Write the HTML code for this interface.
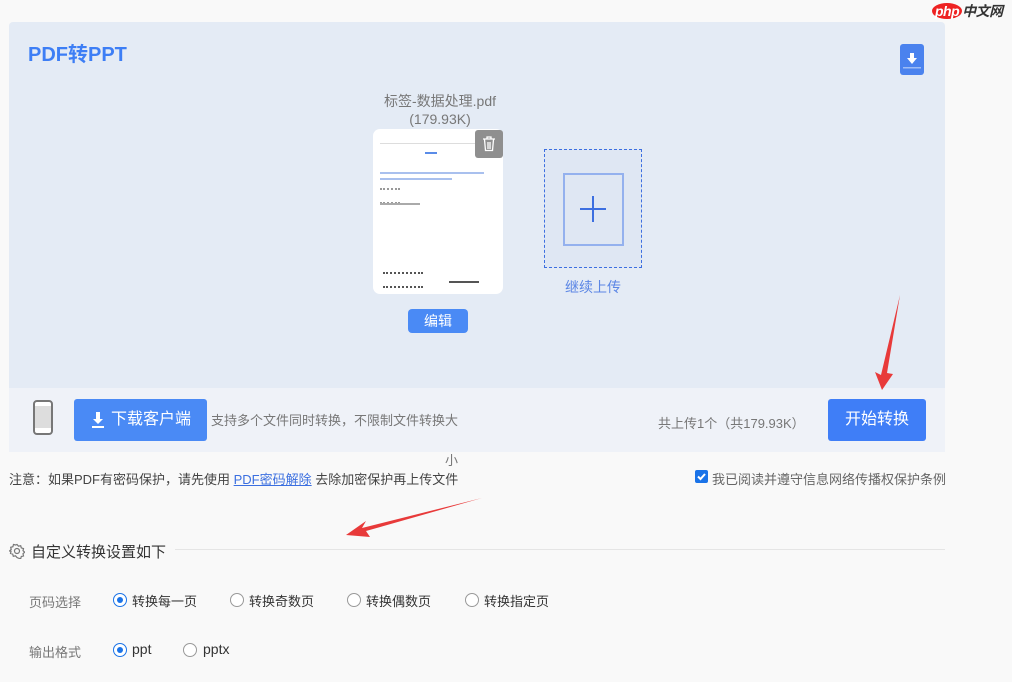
<!DOCTYPE html>
<html><head><meta charset="utf-8"><style>
body{margin:0;width:1012px;height:682px;background:#f9f9f9;font-family:"Liberation Sans","Noto Sans CJK SC",sans-serif;position:relative;overflow:hidden}
.a{position:absolute;white-space:nowrap}
</style></head><body>
<div class="a" style="left:9px;top:22px;width:936px;height:366px;background:#e4ebf5;border-radius:4px 4px 0 0"></div>
<div class="a" style="left:28px;top:38px;font-size:20px;font-weight:bold;color:#3d7ef5">PDF转PPT</div>
<div class="a" style="left:900px;top:44px;width:24px;height:31px;background:#4a82ee;border-radius:3px">
<svg width="24" height="31"><path d="M10 9h4v5h3l-5 6-5-6h3z" fill="#fff"/><rect x="3" y="23" width="18" height="1.5" fill="#9ebcf5"/></svg></div>
<div class="a" style="left:360px;top:92px;width:160px;text-align:center;font-size:14px;color:#777;line-height:18px">标签-数据处理.pdf<br>(179.93K)</div>
<div class="a" style="left:373px;top:129px;width:130px;height:165px;background:#fff;border-radius:7px"></div>
<div class="a" style="left:380px;top:143px;width:95px;height:1px;background:#ddd"></div>
<div class="a" style="left:425px;top:152px;width:12px;height:2px;background:#5a8ce8"></div>
<div class="a" style="left:380px;top:172px;width:104px;height:2px;background:#a9c0ee"></div>
<div class="a" style="left:380px;top:178px;width:72px;height:2px;background:#a9c0ee"></div>
<div class="a" style="left:380px;top:188px;width:20px;height:12px;border-top:2px dotted #999;border-bottom:2px dotted #999"></div>
<div class="a" style="left:380px;top:203px;width:40px;height:2px;background:#aaa"></div>
<div class="a" style="left:383px;top:272px;width:40px;height:12px;border-top:2px dotted #555;border-bottom:2px dotted #555"></div>
<div class="a" style="left:449px;top:281px;width:30px;height:2px;background:#555"></div>
<div class="a" style="left:475px;top:130px;width:28px;height:28px;background:#8f8f8f;border-radius:3px">
<svg width="28" height="28" fill="none" stroke="#fff" stroke-width="1.3"><path d="M8 9h12M12 9V7h4v2M9.5 9.5l1 11h7l1-11M13 12v7M15 12v7"/></svg></div>
<div class="a" style="left:408px;top:309px;width:60px;height:24px;background:#4a8af5;border-radius:4px;color:#fff;font-size:14px;text-align:center;line-height:24px">编辑</div>
<div class="a" style="left:544px;top:149px;width:96px;height:117px;border:1px dashed #3d6fe0;background:#dfe7f3"></div>
<div class="a" style="left:563px;top:173px;width:57px;height:69px;border:2px solid #94b1ee"></div>
<div class="a" style="left:580px;top:208px;width:26px;height:2px;background:#3d6fe0"></div>
<div class="a" style="left:592px;top:196px;width:2px;height:26px;background:#3d6fe0"></div>
<div class="a" style="left:544px;top:277px;width:98px;text-align:center;font-size:14px;color:#5b86e5">继续上传</div>
<div class="a" style="left:9px;top:388px;width:936px;height:64px;background:#eff2f8"></div>
<div class="a" style="left:33px;top:400px;width:20px;height:35px;border:2px solid #777;border-radius:4px;box-sizing:border-box;background:linear-gradient(#fff 0 4px,#ddd 4px 26px,#fff 26px)"></div>
<div class="a" style="left:74px;top:399px;width:133px;height:42px;background:#4a8af5;border-radius:3px;color:#fff;font-size:16px;line-height:42px">
<svg class="a" style="left:16px;top:13px" width="16" height="16"><path d="M6 0h4v7h3l-5 5-5-5h3z M2 14h12v2H2z" fill="#fff"/></svg><span style="margin-left:37px">下载客户端</span></div>
<div class="a" style="left:211px;top:410px;font-size:13px;color:#777">支持多个文件同时转换，不限制文件转换大</div>
<div class="a" style="left:445px;top:450px;font-size:13px;color:#777">小</div>
<div class="a" style="left:658px;top:413px;font-size:13px;color:#777">共上传1个（共179.93K）</div>
<div class="a" style="left:828px;top:399px;width:98px;height:42px;background:#3f7ef7;border-radius:3px;color:#fff;font-size:16px;text-align:center;line-height:42px">开始转换</div>
<div class="a" style="left:9px;top:469px;font-size:13px;color:#444">注意：如果PDF有密码保护，请先使用 <span style="color:#3b6fe0;text-decoration:underline">PDF密码解除</span> 去除加密保护再上传文件</div>
<div class="a" style="left:695px;top:470px;width:13px;height:13px;background:#1a73e8;border-radius:2px"><svg width="13" height="13"><path d="M3 6.5l2.5 2.5 4.5-5" stroke="#fff" stroke-width="2" fill="none"/></svg></div>
<div class="a" style="left:712px;top:469px;font-size:13px;color:#666">我已阅读并遵守信息网络传播权保护条例</div>
<div class="a" style="left:175px;top:549px;width:770px;height:1px;background:#e5e5e5"></div>
<svg class="a" style="left:9px;top:543px" width="16" height="16" fill="none" stroke="#777" stroke-width="1.2"><circle cx="8" cy="8" r="2.5"/><path d="M8 1.5l1.5 1.7 2.2-.5.6 2.2 2.2.6-.5 2.2 1.7 1.5-1.7 1.5.5 2.2-2.2.6-.6 2.2-2.2-.5L8 14.5l-1.5-1.7-2.2.5-.6-2.2-2.2-.6.5-2.2L.5 8l1.7-1.5-.5-2.2 2.2-.6.6-2.2 2.2.5z"/></svg>
<div class="a" style="left:31px;top:541px;font-size:15px;color:#333">自定义转换设置如下</div>
<div class="a" style="left:29px;top:592px;font-size:13px;color:#777">页码选择</div>
<div class="a" style="left:29px;top:642px;font-size:13px;color:#777">输出格式</div>
<style>.r{position:absolute;width:14px;height:14px;border:1px solid #999;border-radius:50%;box-sizing:border-box;background:#fff}.r.on{border-color:#1a73e8}.r.on::after{content:"";position:absolute;left:3px;top:3px;width:6px;height:6px;border-radius:50%;background:#1a73e8}.t{position:absolute;font-size:13px;color:#333}</style>
<div class="r on" style="left:113px;top:593px"></div><div class="t" style="left:132px;top:591px">转换每一页</div>
<div class="r" style="left:230px;top:593px"></div><div class="t" style="left:249px;top:591px">转换奇数页</div>
<div class="r" style="left:347px;top:593px"></div><div class="t" style="left:366px;top:591px">转换偶数页</div>
<div class="r" style="left:465px;top:593px"></div><div class="t" style="left:484px;top:591px">转换指定页</div>
<div class="r on" style="left:113px;top:643px"></div><div class="t" style="left:132px;top:641px;font-size:14px">ppt</div>
<div class="r" style="left:183px;top:643px"></div><div class="t" style="left:203px;top:641px;font-size:14px">pptx</div>
<svg class="a" style="left:0;top:0" width="1012" height="682"><path d="M482 498L362 528l4-7-20 14 24 2-4-6z" fill="#e83a3a"/><path d="M900 295l-19 80-6-3 7 18 11-16-6-1z" fill="#e83a3a"/></svg>
<div class="a" style="left:932px;top:1px;font-size:14px;font-weight:bold;font-style:italic;letter-spacing:-0.5px"><span style="background:#e22;color:#fff;border-radius:50%;padding:0 3px">php</span><span style="color:#333">中文网</span></div>
</body></html>
